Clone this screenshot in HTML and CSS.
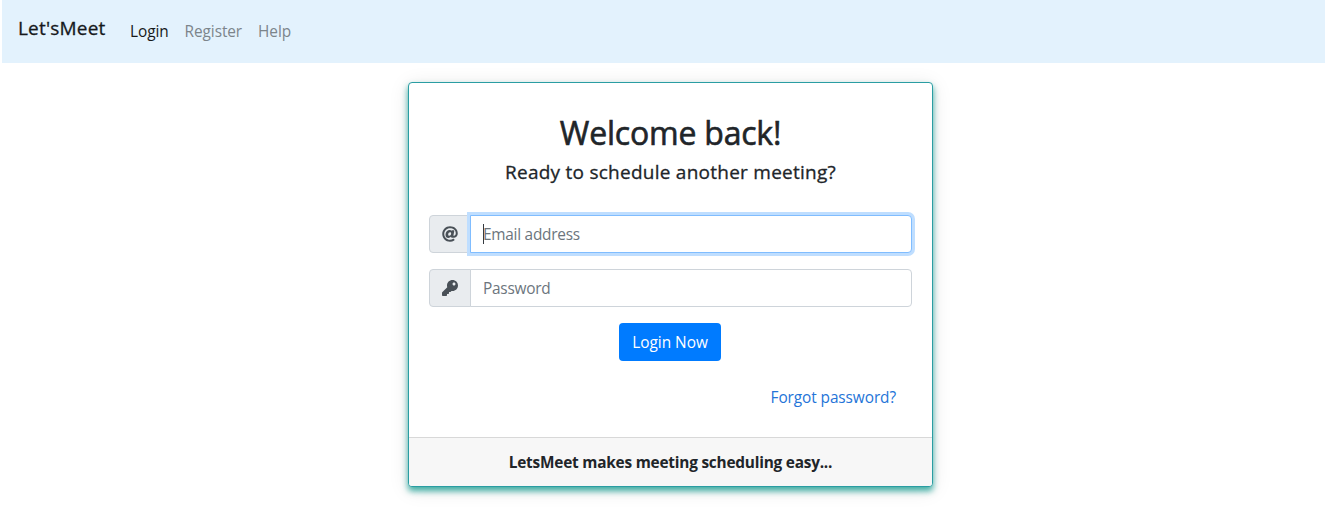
FILE: index.html
```html
<!DOCTYPE html>
<html lang="en">
<head>
<meta charset="utf-8">
<title>Let'sMeet - Login</title>
<link rel="stylesheet" href="styles.css">
</head>
<body>
<nav class="navbar">
  <a class="brand">Let'sMeet</a>
  <a class="nav-link active">Login</a>
  <a class="nav-link">Register</a>
  <a class="nav-link">Help</a>
</nav>
<main class="card">
  <div class="card-body">
    <h1 class="title">Welcome back!</h1>
    <h2 class="subtitle">Ready to schedule another meeting?</h2>
    <form class="form">
      <div class="input-group">
        <span class="addon"><svg class="icon" viewBox="0 0 512 512"><path d="M256 8C118.941 8 8 118.919 8 256c0 137.059 110.919 248 248 248 48.154 0 95.342-14.14 135.408-40.223 12.005-7.815 14.625-24.288 5.552-35.372l-10.177-12.433c-7.671-9.371-21.179-11.667-31.373-5.129C325.92 429.757 291.314 440 256 440c-101.458 0-184-82.542-184-184S154.542 72 256 72c100.139 0 184 57.619 184 160 0 38.786-21.093 79.742-58.17 83.693-17.349-.454-16.91-12.857-13.476-30.024l23.433-121.11C394.653 149.75 383.308 136 368.225 136h-44.981a13.518 13.518 0 0 0-13.432 11.993l-.01.092c-14.697-17.901-40.448-21.775-59.971-21.775-74.58 0-137.831 62.234-137.831 151.46 0 65.303 36.785 105.87 96 105.87 26.984 0 57.369-15.637 74.991-38.333 9.522 34.104 40.613 34.104 70.71 34.104C462.609 379.41 504 307.798 504 232 504 95.653 394.023 8 256 8zm-21.68 304.43c-22.249 0-36.07-15.623-36.07-40.771 0-44.993 30.779-72.729 58.63-72.729 22.292 0 35.601 15.241 35.601 40.77 0 45.061-33.875 72.73-58.161 72.73z"/></svg></span>
        <div class="field focused"><span class="caret"></span>Email address</div>
      </div>
      <div class="input-group">
        <span class="addon"><svg class="icon" viewBox="0 0 512 512"><path d="M512 176.001C512 273.203 433.202 352 336 352c-11.22 0-22.19-1.062-32.827-3.069l-24.012 27.014A23.999 23.999 0 0 1 261.223 384H224v40c0 13.255-10.745 24-24 24h-40v40c0 13.255-10.745 24-24 24H24c-13.255 0-24-10.745-24-24v-78.059c0-6.365 2.529-12.47 7.029-16.971l161.802-161.802C163.108 213.814 160 195.271 160 176 160 78.798 238.797.001 335.999 0 433.488-.001 512 78.511 512 176.001zM336 128c0 26.51 21.49 48 48 48s48-21.49 48-48-21.49-48-48-48-48 21.49-48 48z"/></svg></span>
        <div class="field">Password</div>
      </div>
      <button class="button" type="button">Login Now</button>
    </form>
    <a class="forgot">Forgot password?</a>
  </div>
  <footer class="card-footer">LetsMeet makes meeting scheduling easy...</footer>
</main>
</body>
</html>
```
FILE: styles.css
```css
* { box-sizing: border-box; }
body {
  min-height: 524px;
  margin: 0;
  background: #fff;
  color: #212529;
  font: 15.4px/26px "Open Sans", "Noto Sans", sans-serif;
  letter-spacing: -.25px;
}
.navbar {
  display: flex;
  align-items: flex-start;
  height: 63px;
  margin-left: 2px;
  padding: 19px 16px 0;
  background: #e3f2fd;
}
.brand {
  width: 104px;
  margin-top: -3px;
  font-size: 19px;
  line-height: 24px;
  letter-spacing: .2px;
  color: #16191c;
  -webkit-text-stroke: .3px;
}
.nav-link {
  padding: 0 8px;
  color: #7c858b;
  letter-spacing: -.08px;
}
.nav-link.active { color: #17191a; }
.card {
  display: flex;
  flex-direction: column;
  width: 525px;
  height: 405px;
  margin: 19px 0 0 408px;
  border: 1px solid #2a9da3;
  border-radius: 4px;
  background: #fff;
  box-shadow: 0 4px 6px rgba(0, 150, 136, .75), 0 3px 20px rgba(0, 0, 0, .1);
}
.card-body {
  display: flex;
  flex: 1;
  flex-direction: column;
  padding: 31px 20px 0;
}
.title, .subtitle {
  margin: 0;
  font-weight: 400;
  text-align: center;
}
.title {
  font-size: 32px;
  line-height: 38px;
  letter-spacing: -.2px;
  -webkit-text-stroke: .6px;
}
.subtitle {
  margin-top: 8px;
  font-size: 19px;
  line-height: 24px;
  letter-spacing: .25px;
  -webkit-text-stroke: .3px;
}
.form {
  display: flex;
  flex-direction: column;
  gap: 16px;
  margin-top: 31px;
}
.input-group {
  display: flex;
  height: 38px;
}
.addon {
  display: flex;
  align-items: center;
  justify-content: center;
  width: 42px;
  padding-right: 1px;
  border: 1px solid #ced4da;
  border-radius: 4px 0 0 4px;
  background: #e9ecef;
}
.icon {
  width: 16px;
  height: 16px;
  fill: #495057;
}
.field {
  position: relative;
  flex: 1;
  margin-left: -1px;
  padding: 6px 12px;
  border: 1px solid #ced4da;
  border-radius: 0 4px 4px 0;
  background: #fff;
  color: #6c757d;
}
.field.focused {
  border-color: #80bdff;
  box-shadow: 0 0 0 3px #bfdeff;
}
.caret {
  position: absolute;
  top: 8px;
  left: 12px;
  width: 1px;
  height: 20px;
  background: #343a40;
}
.button {
  align-self: center;
  width: 102px;
  height: 38px;
  margin-right: 1px;
  padding: 2px 0 0;
  border: 0;
  border-radius: 4px;
  background: #007bff;
  color: #fff;
  font: inherit;
  letter-spacing: 0;
}
.forgot {
  align-self: flex-end;
  margin: 24px 16px 0 0;
  color: #2474d8;
  letter-spacing: -.08px;
}
.card-footer {
  height: 49px;
  padding-top: 12px;
  border-top: 1px solid #d8d8d8;
  border-radius: 0 0 3px 3px;
  background: #f7f7f7;
  font-weight: 700;
  letter-spacing: -.22px;
  text-align: center;
}
```
